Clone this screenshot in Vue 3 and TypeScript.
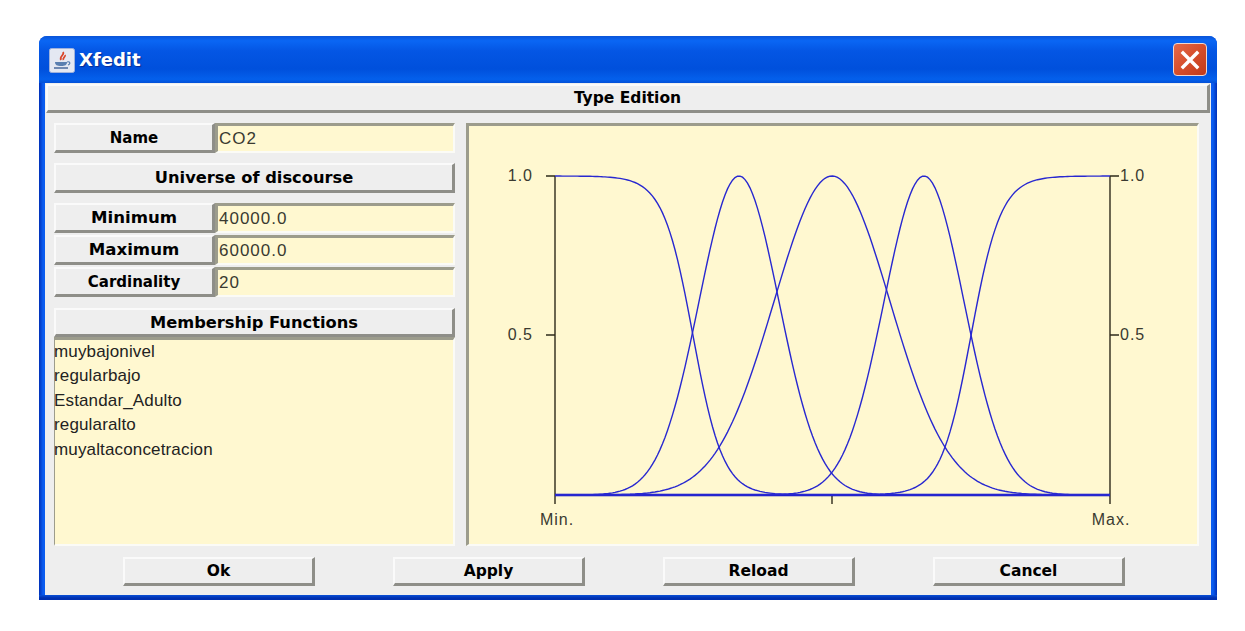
<script setup lang="ts">
const L = 555, R = 1110, T = 177, B = 496
const px = (v: number) => B - v * (B - T)
function curve(fn: (x: number) => number): string {
  const pts: string[] = []
  for (let x = L; x <= R; x += 2.5) pts.push(`${x},${px(fn(x)).toFixed(1)}`)
  return 'M' + pts.join(' L')
}
const gauss = (c: number, s: number) => (x: number) => Math.exp(-((x - c) ** 2) / (2 * s * s))
const curves = [
  curve((x) => 1 / (1 + Math.exp((x - 693) / 15))),
  curve(gauss(739, 40)),
  curve(gauss(832, 58)),
  curve(gauss(924, 40)),
  curve((x) => 1 / (1 + Math.exp((971 - x) / 15))),
]
const fields = [
  { label: 'Minimum', value: '40000.0', big: true },
  { label: 'Maximum', value: '60000.0', big: true },
  { label: 'Cardinality', value: '20', big: false },
]
const members = ['muybajonivel', 'regularbajo', 'Estandar_Adulto', 'regularalto', 'muyaltaconcetracion']
const actions = ['Ok', 'Apply', 'Reload', 'Cancel']
</script>

<template>
  <div class="window">
    <header class="titlebar">
      <svg class="app-icon" width="26" height="25" viewBox="0 0 26 25">
        <rect x="0.5" y="0.5" width="25" height="24" rx="2" fill="#e4e8f2" stroke="#9fb2dc" />
        <path d="M14 4c2 3-4 4-2 8M16 7c1 2-3 3-1.500 5" fill="none" stroke="#d9452a" stroke-width="1.800" />
        <path d="M6 14h12c0 3-2 4-6 4s-6-1-6-4z" fill="#5a7fb0" />
        <path d="M18 14c3-1 4 2 1 3" fill="none" stroke="#5a7fb0" stroke-width="1.200" />
        <path d="M5 20h14" stroke="#4a6a9c" stroke-width="1.500" />
      </svg>
      <span class="title">Xfedit</span>
      <button class="close" type="button" aria-label="Close">
        <svg width="22" height="22" viewBox="0 0 22 22">
          <path d="M4 4L18 18M18 4L4 18" stroke="#fff" stroke-width="3.400" stroke-linecap="square" />
        </svg>
      </button>
    </header>

    <main class="content">
      <div class="raised heading">Type Edition</div>

      <section class="body">
        <aside class="left">
          <div class="row first">
            <div class="raised label">Name</div>
            <div class="sunken field">CO2</div>
          </div>
          <div class="raised wide universe">Universe of discourse</div>
          <div class="fields">
            <div v-for="f in fields" :key="f.label" class="row">
              <div class="raised label" :class="{ big: f.big }">{{ f.label }}</div>
              <div class="sunken field">{{ f.value }}</div>
            </div>
          </div>
          <div class="raised wide members-head">Membership Functions</div>
          <ul class="sunken list">
            <li v-for="m in members" :key="m">{{ m }}</li>
          </ul>
        </aside>

        <div class="sunken plot">
          <svg class="chart" width="730" height="419" viewBox="469 127 730 419">
            <g stroke="#2e2a1a" stroke-width="1.400" fill="none">
              <path d="M546 177H555M546 336H555M1110 177H1119M1110 336H1119" />
              <path d="M555 177V505M1110 177V505M832 496V505" />
            </g>
            <path d="M555 496H1110" stroke="#0000c8" stroke-width="2.600" />
            <path v-for="(d, i) in curves" :key="i" :d="d" fill="none" stroke="#2828d0" stroke-width="1.400" />
            <g class="tick">
              <text x="533" y="182" text-anchor="end">1.0</text>
              <text x="533" y="341" text-anchor="end">0.5</text>
              <text x="1120" y="182">1.0</text>
              <text x="1120" y="341">0.5</text>
              <text x="557" y="526" text-anchor="middle">Min.</text>
              <text x="1111" y="526" text-anchor="middle">Max.</text>
            </g>
          </svg>
        </div>
      </section>

      <footer class="actions">
        <div v-for="a in actions" :key="a" class="raised action">{{ a }}</div>
      </footer>
    </main>
  </div>
</template>

<style>
html, body { margin: 0; background: #fff; }
</style>

<style scoped>
.window {
  box-sizing: border-box;
  width: 1178px;
  height: 564px;
  margin: 36px 0 0 39px;
  display: flex;
  flex-direction: column;
  border-radius: 8px 8px 0 0;
  background: linear-gradient(180deg, transparent calc(100% - 5px), #0a50d8 calc(100% - 5px), #0030b0 calc(100% - 2px)),
    linear-gradient(90deg, #0030b8 0, #0a5cf0 4px, #0a5cf0 calc(100% - 4px), #0030b8 100%);
  overflow: hidden;
  font-family: "Liberation Sans", sans-serif;
}
.titlebar {
  height: 47px;
  flex: none;
  display: flex;
  align-items: center;
  padding: 0 10px;
  background: linear-gradient(180deg, #0a54d8 0, #0a66f4 10%, #0456e4 32%, #0050dc 70%, #0460ec 92%, #0350d8 100%);
}
.app-icon { flex: none; margin-top: 1px; }
.title {
  margin-left: 4px;
  color: #fff;
  font: bold 18px "DejaVu Sans", sans-serif;
  text-shadow: 1px 1px 1px #0a2a90;
}
.close {
  margin-left: auto;
  width: 34px;
  height: 33px;
  padding: 0;
  display: grid;
  place-items: center;
  border: 1px solid #f0d8d0;
  border-radius: 4px;
  background: linear-gradient(135deg, #e4694a 0, #d64e2b 50%, #c03a1b 100%);
}
.content {
  flex: 1;
  margin: 0 6px 5px;
  padding-top: 1px;
  background: #eeeeee;
  display: flex;
  flex-direction: column;
  min-height: 0;
}
.raised {
  box-sizing: border-box;
  display: flex;
  align-items: center;
  justify-content: center;
  background: #eeeeee;
  border-style: solid;
  border-color: #fafafa #8e8e88 #8e8e88 #fafafa;
  border-width: 2px 3px 3px 2px;
  color: #000;
  font: bold 15.500px "DejaVu Sans", sans-serif;
}
.sunken {
  box-sizing: border-box;
  background: #fff8d0;
  border-style: solid;
  border-color: #9c9c8c #fbfbf6 #fbfbf6 #9c9c8c;
  border-width: 3px 2px 2px 3px;
  color: #3a3a30;
}
.heading { height: 29px; margin: 0 1px; }
.body {
  display: flex;
  margin: 10px 12px 0 9px;
  gap: 11px;
  height: 423px;
}
.left { width: 401px; display: flex; flex-direction: column; }
.row { display: flex; height: 30px; }
.label { width: 161px; flex: none; font-size: 15px; }
.label.big { font-size: 16.600px; }
.field {
  flex: 1;
  display: flex;
  align-items: center;
  padding-left: 1px;
  font-size: 17px;
  letter-spacing: 1px;
}
.wide { height: 30px; font-size: 16.300px; }
.universe { margin-top: 10px; }
.fields { margin-top: 10px; display: flex; flex-direction: column; gap: 2px; }
.members-head { margin-top: 11px; height: 29px; }
.list {
  flex: 1;
  margin: 0;
  padding: 0;
  list-style: none;
  font-size: 17px;
  letter-spacing: 0.150px;
  color: #222;
  border-left-width: 1px;
}
.list li { height: 24.400px; line-height: 24px; margin-left: -1px; }
.plot { flex: 1; overflow: hidden; }
.chart { display: block; }
.tick text {
  font: 16px "Liberation Sans", sans-serif;
  letter-spacing: 1px;
  fill: #3a3a30;
}
.actions {
  display: flex;
  gap: 78px;
  padding: 11px 0 0 78px;
}
.action { width: 192px; height: 29px; }
</style>
